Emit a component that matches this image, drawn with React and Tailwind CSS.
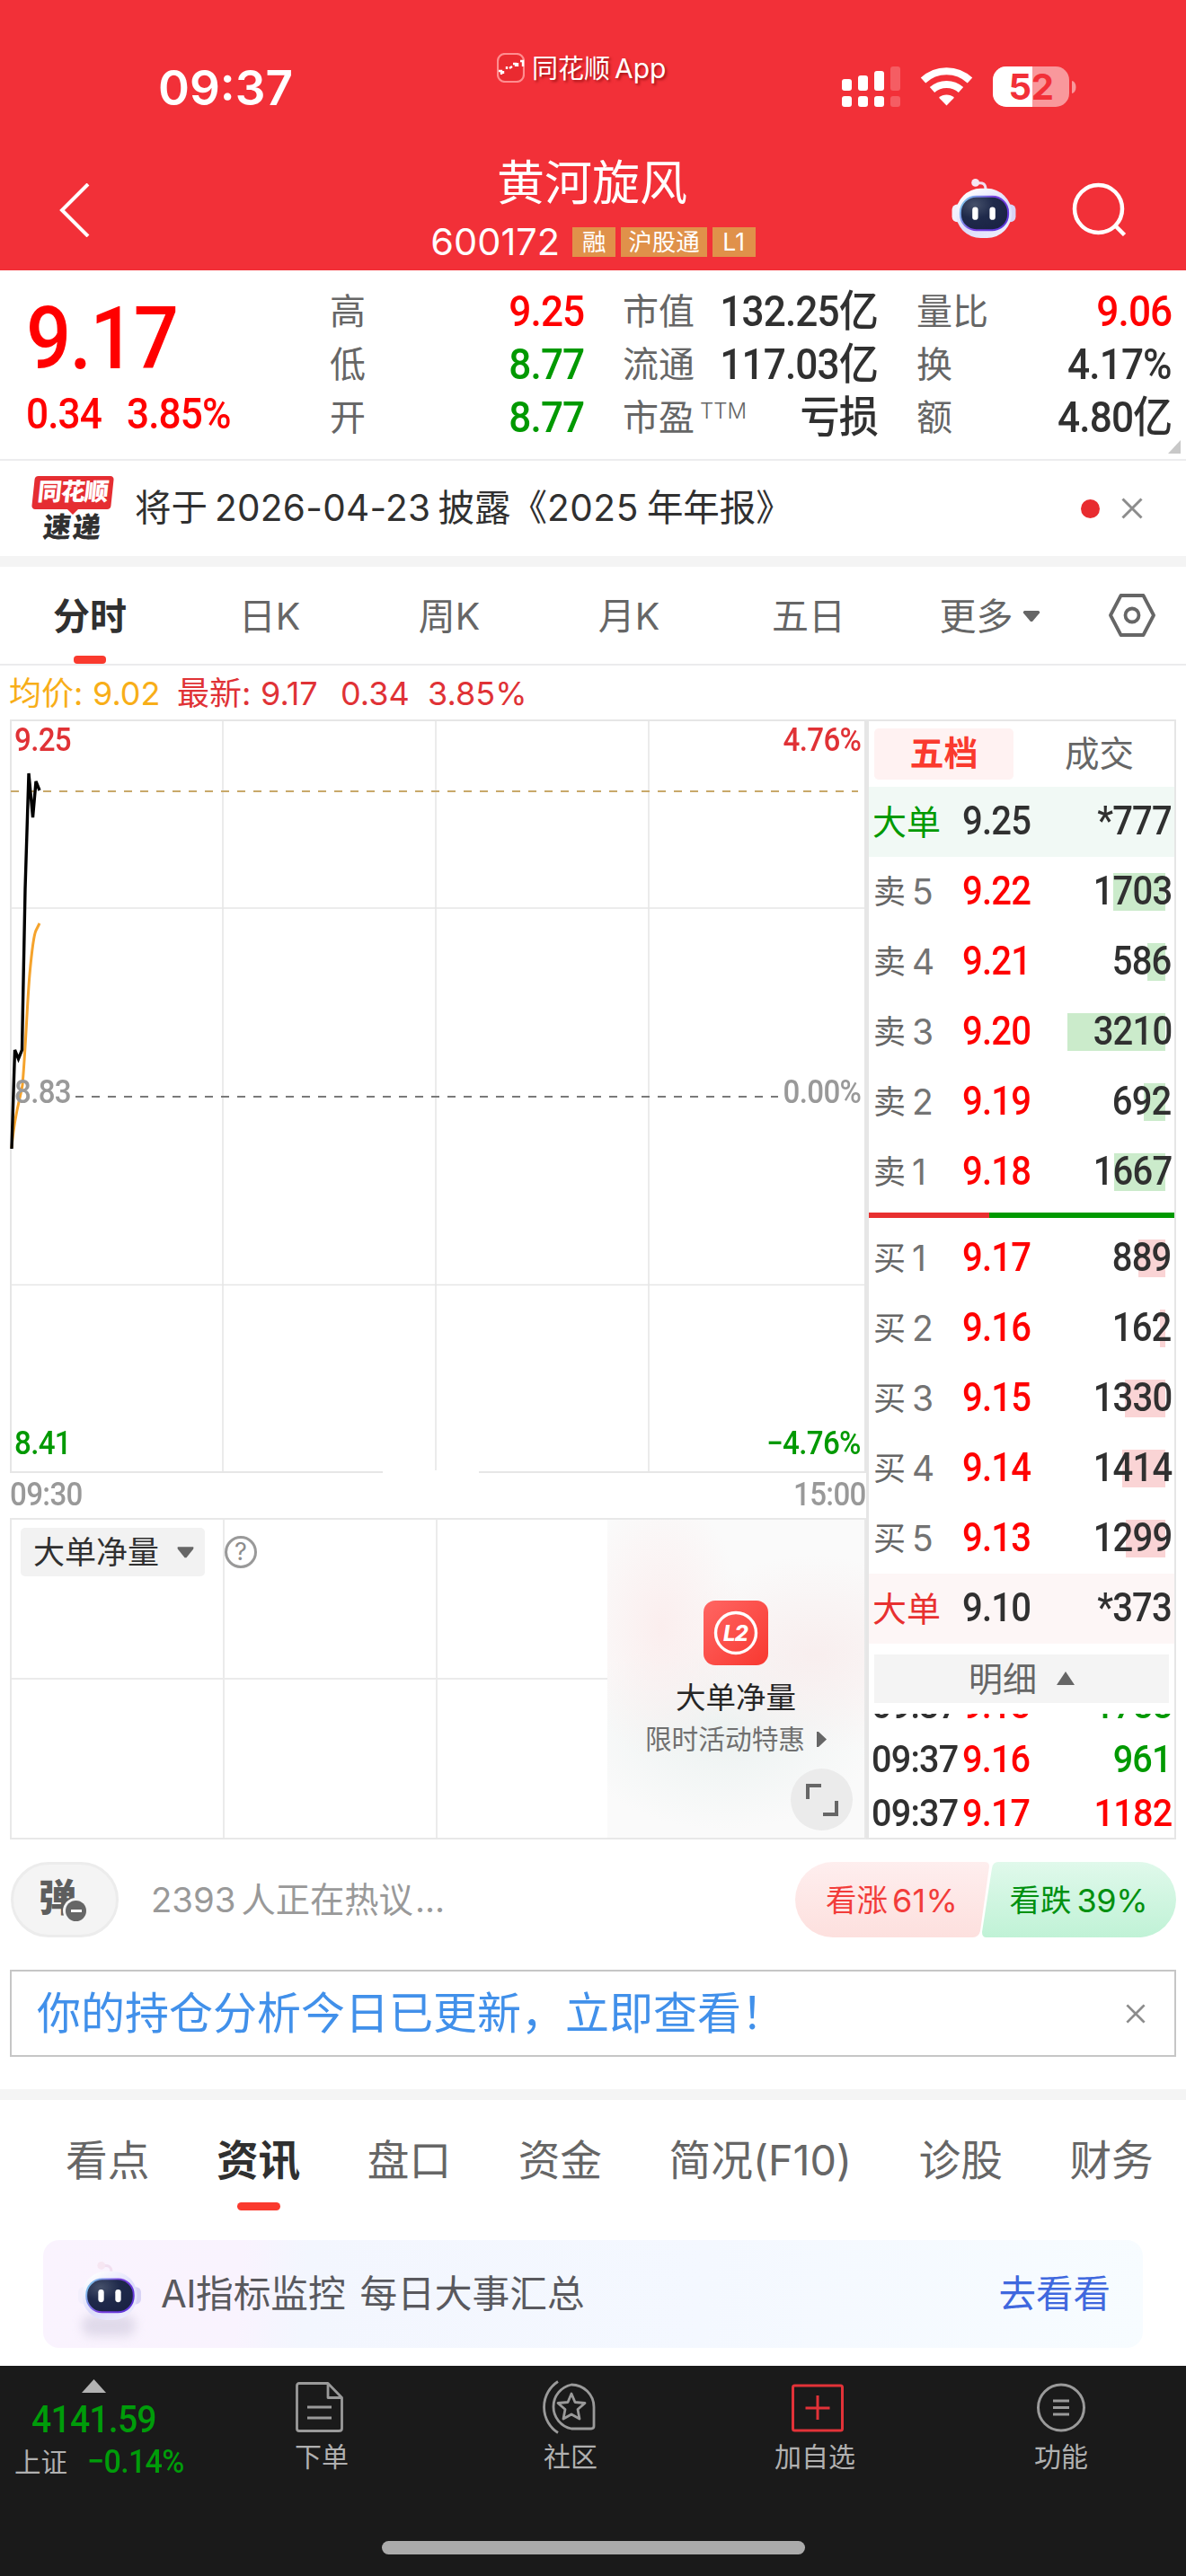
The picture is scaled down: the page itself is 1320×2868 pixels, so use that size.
import React from "react";

const CJK = "font-['Inter','Noto_Sans_CJK_SC',sans-serif]";
const NUM = "font-['Roboto','Noto_Sans_CJK_SC',sans-serif] font-medium tracking-[-0.020em] scale-x-[0.92]";

function Robot({ className }) {
  return (
    <svg className={className} viewBox="0 0 72 68" fill="none">
      <defs>
        <linearGradient id="shell" x1="20" y1="10" x2="56" y2="68" gradientUnits="userSpaceOnUse">
          <stop stopColor="#ffffff" />
          <stop offset="0.55" stopColor="#dcdcfa" />
          <stop offset="1" stopColor="#eeeefc" />
        </linearGradient>
        <linearGradient id="rim" x1="10" y1="22" x2="62" y2="56" gradientUnits="userSpaceOnUse">
          <stop stopColor="#7fd6ee" />
          <stop offset="0.5" stopColor="#7a3fe0" />
          <stop offset="1" stopColor="#5a35d8" />
        </linearGradient>
        <radialGradient id="visor" cx="0.3" cy="0.25" r="0.8">
          <stop stopColor="#45506a" />
          <stop offset="0.5" stopColor="#1f2a4b" />
          <stop offset="1" stopColor="#1a2344" />
        </radialGradient>
      </defs>
      <path d="M38 12c0-6-3-8-9-7" stroke="#f1dff0" strokeWidth="3" />
      <circle cx="26.500" cy="4.500" r="4.500" fill="#f6e6f2" />
      <rect x="0" y="29" width="12" height="20" rx="6" fill="#f3effc" />
      <rect x="60" y="29" width="12" height="20" rx="6" fill="#d8d3f6" />
      <rect x="4.500" y="11" width="63" height="56" rx="28" fill="url(#shell)" />
      <rect x="9.500" y="20" width="54" height="38" rx="18" fill="url(#visor)" stroke="url(#rim)" strokeWidth="2" />
      <rect x="23" y="32" width="6.500" height="14.500" rx="3.200" fill="#fff" />
      <rect x="42.500" y="32" width="6.500" height="14.500" rx="3.200" fill="#fff" />
    </svg>
  );
}

function Cross({ className }) {
  return (
    <svg className={className} viewBox="0 0 24 24" fill="none" stroke="#8c8c8c" strokeWidth="3">
      <path d="M1.500 1.500l21 21M22.500 1.500l-21 21" />
    </svg>
  );
}

function StatusBar() {
  return (
    <div className="flex h-[150px] pt-[56px]">
      <div className="ml-[176px] h-[84px] w-[160px] font-['Inter'] text-[53px] leading-[84px] font-semibold">09:37</div>
      <div className="ml-[217px] flex h-[38px] w-[200px] items-center gap-[8px]">
        <svg className="h-[33px] w-[31px] shrink-0" viewBox="0 0 31 33" fill="none">
          <rect x="1" y="1" width="29" height="31" rx="8" fill="#ea2a30" stroke="#ff8d8f" strokeWidth="2.200" />
          <path d="M2 20h3v4M7 20v3M11 15v3M14 17l3-2M18 12h3v3M23 11v4M26 9h3v6" stroke="#fff" strokeWidth="2.400" />
        </svg>
        <div className="pt-[2px] text-[29px] leading-[38px] whitespace-nowrap [text-shadow:2px_2px_3px_rgba(110,0,0,0.6)]">
          同花顺<span className="ml-[5px] text-[30px]">App</span>
        </div>
      </div>
      <svg className="mt-[16px] ml-[184px] h-[50px] w-[270px]" viewBox="0 0 270 50">
        <g fill="#fff">
          <rect x="0" y="16" width="11" height="13" rx="3" />
          <rect x="18" y="12" width="11" height="17" rx="3" />
          <rect x="36" y="7" width="11" height="22" rx="3" />
          <rect x="54" y="2" width="11" height="27" rx="3" opacity="0.22" />
          <rect x="0" y="35" width="11" height="12" rx="3" />
          <rect x="18" y="35" width="11" height="12" rx="3" />
          <rect x="36" y="35" width="11" height="12" rx="3" />
          <rect x="54" y="35" width="11" height="12" rx="3" opacity="0.22" />
        </g>
        <g fill="none" stroke="#fff" strokeWidth="8">
          <path d="M90.500 17.500a38 38 0 0 1 52 0" />
          <path d="M100.500 28a24 24 0 0 1 32 0" />
        </g>
        <path d="M116.500 45.500l-8.500-8.700a12.500 12.500 0 0 1 17 0z" fill="#fff" />
        <rect x="168" y="2" width="85" height="45" rx="15" fill="#fff" opacity="0.5" />
        <path d="M183 2h29v45h-29a15 15 0 0 1-15-15v-15a15 15 0 0 1 15-15z" fill="#fff" />
        <path d="M256 18c6 1 6 13 0 14z" fill="#fff" opacity="0.5" />
        <text x="210.500" y="39" textAnchor="middle" fontFamily="Inter" fontWeight="700" fontSize="40" fill="#f23038" letterSpacing="-0.5">52</text>
      </svg>
    </div>
  );
}

function Tag({ children }) {
  return <div className="h-[33px] min-w-[48px] bg-[#e0914a] px-[8px] text-center text-[26.500px] leading-[32px] text-white">{children}</div>;
}

function Header() {
  return (
    <div className="h-[301px] bg-[#f23038] text-white">
      <StatusBar />
      <div className="flex h-[151px]">
        <svg className="mt-[54px] ml-[64px] h-[60px] w-[38px]" viewBox="0 0 38 60" fill="none" stroke="#fff" strokeWidth="4">
          <path d="M34 1L5 30L34 59" />
        </svg>
        <div className="ml-[348px] flex w-[418px] flex-col items-center pt-[22px]">
          <div className="h-[64px] text-[53px] leading-[64px]">黄河旋风</div>
          <div className="mt-[13px] flex h-[40px] items-center gap-[6px] pl-[2px]">
            <div className="mr-[8px] text-[41.500px] leading-[40px]">600172</div>
            <Tag>融</Tag>
            <Tag>沪股通</Tag>
            <Tag>L1</Tag>
          </div>
        </div>
        <Robot className="mt-[49px] ml-[191px] h-[67px] w-[72px]" />
        <svg className="mt-[53px] ml-[62px] h-[60px] w-[62px]" viewBox="0 0 62 60" fill="none" stroke="#fff" strokeWidth="4.500">
          <circle cx="29.500" cy="29.500" r="26.500" />
          <path d="M48.500 48.500l10 10" />
        </svg>
      </div>
    </div>
  );
}

function Quote({ label, value, color, sup }) {
  return (
    <div className="flex h-[59px] items-center justify-between">
      <div className="flex text-[40px] leading-[59px] text-[#666]">
        {label}
        {sup && <span className="mt-[3px] ml-[6px] text-[24px] leading-[40px] font-light">{sup}</span>}
      </div>
      <div className={`${NUM} origin-right text-[48px] leading-[56px] ${color}`}>{value}</div>
    </div>
  );
}

function Quotes() {
  return (
    <div className="flex h-[212px] border-b-2 border-[#ececee]">
      <div className="w-[337px] pl-[29px] text-[#ff0000]">
        <div className={`${NUM} mt-[26px] h-[100px] origin-left text-[96px] leading-[100px]`}>9.17</div>
        <div className="mt-[6px] flex h-[58px] text-[48px] leading-[56px]">
          <span className={`${NUM} w-[112px] origin-left`}>0.34</span>
          <span className={`${NUM} origin-left`}>3.85%</span>
        </div>
      </div>
      <div className="mt-[16px] ml-[30px] w-[283px]">
        <Quote label="高" value="9.25" color="text-[#ff0000]" />
        <Quote label="低" value="8.77" color="text-[#009900]" />
        <Quote label="开" value="8.77" color="text-[#009900]" />
      </div>
      <div className="mt-[16px] ml-[43px] w-[284px]">
        <Quote label="市值" value="132.25亿" color="text-[#303030]" />
        <Quote label="流通" value="117.03亿" color="text-[#303030]" />
        <Quote label="市盈" sup="TTM" value="亏损" color="text-[#303030]" />
      </div>
      <div className="mt-[16px] ml-[43px] w-[284px]">
        <Quote label="量比" value="9.06" color="text-[#ff0000]" />
        <Quote label="换" value="4.17%" color="text-[#303030]" />
        <Quote label="额" value="4.80亿" color="text-[#303030]" />
      </div>
      <svg className="mt-[189px] ml-[-4px] h-[15px] w-[14px] shrink-0" viewBox="0 0 14 15" fill="#c8c8c8">
        <path d="M14 0v15H0z" />
      </svg>
    </div>
  );
}

function News() {
  return (
    <div className="flex h-[106px] items-center text-[#303030]">
      <div className="ml-[37px] w-[88px]">
        <div className="h-[37px] -skew-x-6 rounded-[4px] bg-[#e52d32] text-center text-[27px] leading-[35px] font-black tracking-[-1px] text-white">同花顺</div>
        <svg className="mx-auto h-[6px] w-[12px]" viewBox="0 0 12 6" fill="#e52d32">
          <path d="M0 0h12L6 6z" />
        </svg>
        <div className="h-[30px] -skew-x-6 text-center text-[31px] leading-[27px] font-black tracking-[2px]">速递</div>
      </div>
      <div className="ml-[25px] flex w-[1053px] text-[40.500px] leading-[50px] whitespace-nowrap">
        将于<span className="mx-[8px] tracking-[0.300px]">2026-04-23</span>披露《<span className="mr-[9px] tracking-[0.600px]">2025</span>年年报》
      </div>
      <div className="h-[21px] w-[21px] rounded-full bg-[#e82c30]" />
      <Cross className="ml-[24px] h-[24px] w-[24px]" />
    </div>
  );
}

function ChartTabs() {
  const tabs = ["日K", "周K", "月K", "五日"];
  return (
    <div className="flex h-[110px] items-start border-b-2 border-[#ebebed] text-[41px] text-[#666]">
      <div className="flex w-[200px] flex-col items-center">
        <div className="h-[99px] leading-[110px] font-bold text-[#303030]">分时</div>
        <div className="h-[9px] w-[36px] rounded-[4px] bg-[#fa3a2e]" />
      </div>
      {tabs.map((t) => (
        <div key={t} className="w-[200px] text-center leading-[110px]">
          {t}
        </div>
      ))}
      <div className="flex w-[200px] items-center justify-center gap-[10px] pl-[3px] leading-[110px]">
        更多
        <svg className="h-[13px] w-[20px]" viewBox="0 0 20 13" fill="#666">
          <path d="M2 0h16q2 1 1 2.500l-8 9.500h-2l-8-9.500q-1-1.500 1-2.500z" />
        </svg>
      </div>
      <svg className="mt-[30px] ml-[34px] h-[48px] w-[52px]" viewBox="0 0 52 48" fill="none" stroke="#666" strokeWidth="3.800">
        <path d="M13.500 2h25L50 24L38.500 46h-25L2 24z" strokeLinejoin="round" />
        <circle cx="26" cy="24" r="7.500" />
      </svg>
    </div>
  );
}

function Legend() {
  return (
    <div className="flex h-[60px] pl-[10px] text-[36px] leading-[62px] whitespace-nowrap text-[#e03236]">
      <span className="w-[93px] text-[#f8ae18]">均价:</span>
      <span className="w-[94px] text-[#f8ae18]">9.02</span>
      <span className="w-[93px]">最新:</span>
      <span className="w-[89px]">9.17</span>
      <span className="w-[97px]">0.34</span>
      <span>3.85%</span>
    </div>
  );
}

function PriceChart() {
  return (
    <div className="relative h-[889px] w-[953px]">
      <svg className="h-[889px] w-[953px]" viewBox="11 801 953 889" fill="none">
        <g stroke="#e6e6e6" strokeWidth="2">
          <path d="M11 802H964M12 801V1639M963 801V1639M11 1639H964" />
          <path d="M248 802V1639M485 802V1639M722 802V1639M12 1011H963M12 1430.500H963" strokeWidth="1.600" />
        </g>
        <path d="M426 1639H533" stroke="#fff" strokeWidth="4" />
        <path d="M12 881H955" stroke="#c8a96a" strokeWidth="2" strokeDasharray="9 9" />
        <path d="M84 1221H866" stroke="#7a7a7a" strokeWidth="2" strokeDasharray="9 9" />
        <path d="M13 1278C16 1240 22 1226 25 1208C29 1160 30 1120 33 1085C36 1052 38 1040 40 1036L44 1028" stroke="#f5a32c" strokeWidth="3" />
        <path d="M13 1279L16.500 1169L20.500 1179L24.500 1169L28 990L32 861L36.500 910L40 870L44 880" stroke="#000" strokeWidth="3.400" />
      </svg>
      <div className={`${NUM} absolute top-[1px] left-[5px] origin-left text-[36px] leading-[44px] text-[#e03236]`}>9.25</div>
      <div className={`${NUM} absolute top-[1px] right-[6px] origin-right text-[36px] leading-[44px] text-[#e03236]`}>4.76%</div>
      <div className={`${NUM} absolute top-[393px] left-[5px] origin-left text-[36px] leading-[44px] text-[#999]`}>8.83</div>
      <div className={`${NUM} absolute top-[393px] right-[6px] origin-right text-[36px] leading-[44px] text-[#999]`}>0.00%</div>
      <div className={`${NUM} absolute top-[784px] left-[5px] origin-left text-[36px] leading-[44px] text-[#009900]`}>8.41</div>
      <div className={`${NUM} absolute top-[784px] right-[6px] origin-right text-[36px] leading-[44px] text-[#009900]`}>−4.76%</div>
      <div className={`${NUM} absolute top-[841px] left-0 origin-left text-[36px] leading-[44px] text-[#999]`}>09:30</div>
      <div className={`${NUM} absolute top-[841px] right-0 origin-right text-[36px] leading-[44px] text-[#999]`}>15:00</div>
    </div>
  );
}

function NetChart() {
  return (
    <div className="flex h-[358px] w-[953px] border-2 border-[#e8e8e8]">
      <div className="grid w-[663px] grid-cols-[237px_237px_189px] grid-rows-[178px_176px]">
        <div className="border-r-2 border-b-2 border-[#ebebeb] pt-[9px] pl-[10px]">
          <div className="flex h-[54px] w-[205px] items-center rounded-[5px] bg-[#f2f2f2] pl-[14px] text-[#303030]">
            <span className="text-[35px] leading-[54px]">大单净量</span>
            <svg className="ml-[20px] h-[13px] w-[19px]" viewBox="0 0 20 13" fill="#666">
              <path d="M1 0h18q1 1 0 2.500l-8 10h-2l-8-10q-1-1.500 0-2.500z" />
            </svg>
          </div>
        </div>
        <div className="border-r-2 border-b-2 border-[#ebebeb]">
          <div className="mt-[18px] h-[36px] w-[36px] rounded-full border-[3px] border-[#999] text-center text-[27px] leading-[30px] text-[#8c8c8c]">?</div>
        </div>
        <div className="border-b-2 border-[#ebebeb]" />
        <div className="border-r-2 border-[#ebebeb]" />
        <div className="border-r-2 border-[#ebebeb]" />
        <div />
      </div>
      <div className="relative flex w-[286px] flex-col items-center bg-[#fafafa] bg-[radial-gradient(90px_150px_at_60px_120px,#fbeeee,transparent),radial-gradient(160px_110px_at_230px_150px,#f8eeee,transparent),radial-gradient(170px_110px_at_130px_235px,#ecf2f1,transparent)] pt-[90px]">
        <svg className="h-[72px] w-[72px]" viewBox="0 0 72 72">
          <defs>
            <linearGradient id="l2" x1="0" y1="0" x2="1" y2="1">
              <stop stopColor="#ff6663" />
              <stop offset="1" stopColor="#f83830" />
            </linearGradient>
          </defs>
          <rect width="72" height="72" rx="13" fill="url(#l2)" />
          <circle cx="36" cy="36" r="22.500" fill="none" stroke="#fff" strokeWidth="3.400" />
          <text x="35.500" y="45" textAnchor="middle" fontFamily="Inter" fontWeight="800" fontStyle="italic" fontSize="24" fill="#fff" letterSpacing="-1">L2</text>
        </svg>
        <div className="mt-[13px] h-[48px] text-[33.500px] leading-[46px] text-[#262626]">大单净量</div>
        <div className="flex h-[42px] items-center gap-[13px] text-[29.700px] leading-[42px] whitespace-nowrap text-[#707070]">
          限时活动特惠
          <svg className="h-[17px] w-[11px]" viewBox="0 0 11 17" fill="#666">
            <path d="M0 0h2l9 8.500l-9 8.500h-2z" />
          </svg>
        </div>
        <div className="absolute right-[13px] bottom-[8px] flex h-[69px] w-[69px] items-center justify-center rounded-full bg-[#ebebeb]">
          <svg className="h-[36px] w-[36px]" viewBox="0 0 36 36" fill="none" stroke="#666" strokeWidth="4">
            <path d="M2 17V2H17M19 34H34V19" />
          </svg>
        </div>
      </div>
    </div>
  );
}

function BookRow({ label, n, price, qty, bar, barColor }) {
  return (
    <div className="relative flex h-[78px] items-center">
      <div className="absolute right-[10px] h-[42px]" style={{ width: bar, background: barColor }} />
      <div className="ml-[5px] w-[43px] text-[36px] leading-[80px] text-[#666]">{label}</div>
      <div className="w-[56px] text-[39px] leading-[80px] text-[#737373]">{n}</div>
      <div className={`${NUM} origin-left text-[43.500px] leading-[80px] text-[#ff0000]`}>{price}</div>
      <div className={`${NUM} relative mr-[3px] ml-auto origin-right text-[43.500px] leading-[80px] text-[#303030]`}>{qty}</div>
    </div>
  );
}

function BigRow({ color, bg, price, qty }) {
  return (
    <div className={`flex h-[78px] items-center ${bg}`}>
      <div className={`ml-[4px] w-[100px] text-[38px] leading-[80px] ${color}`}>大单</div>
      <div className={`${NUM} origin-left text-[43.500px] leading-[80px] text-[#303030]`}>{price}</div>
      <div className={`${NUM} mr-[3px] ml-auto origin-right text-[43.500px] leading-[80px] text-[#303030]`}>{qty}</div>
    </div>
  );
}

function Tick({ price, qty, color }) {
  return (
    <div className="flex h-[60px] shrink-0 items-center text-[43px] leading-[60px]">
      <div className={`${NUM} ml-[3px] w-[101px] origin-left text-[#303030]`}>09:37</div>
      <div className={`${NUM} origin-left text-[#ff0000]`}>{price}</div>
      <div className={`${NUM} mr-[3px] ml-auto origin-right ${color}`}>{qty}</div>
    </div>
  );
}

const sells = [
  ["5", "9.22", "1703", 58],
  ["4", "9.21", "586", 20],
  ["3", "9.20", "3210", 109],
  ["2", "9.19", "692", 24],
  ["1", "9.18", "1667", 57],
];
const buys = [
  ["1", "9.17", "889", 30],
  ["2", "9.16", "162", 6],
  ["3", "9.15", "1330", 45],
  ["4", "9.14", "1414", 48],
  ["5", "9.13", "1299", 44],
];

function OrderBook() {
  return (
    <div className="flex h-[1247px] w-[345px] flex-col border-2 border-l-[3px] border-[#e6e6e6]">
      <div className="flex h-[73px] items-center">
        <div className="ml-[6px] h-[57px] w-[155px] rounded-[5px] bg-[#fff2f2] text-center text-[38px] leading-[54px] font-bold text-[#fa3a2e]">五档</div>
        <div className="ml-[57px] text-[38.500px] leading-[54px] text-[#666]">成交</div>
      </div>
      <BigRow color="text-[#009900]" bg="bg-[#f1f9f5]" price="9.25" qty="*777" />
      {sells.map(([n, p, q, b]) => (
        <BookRow key={n} label="卖" n={n} price={p} qty={q} bar={b} barColor="#cbebcb" />
      ))}
      <div className="mt-[6px] mb-[6px] flex h-[6px]">
        <div className="w-[134px] bg-[#e83030]" />
        <div className="flex-1 bg-[#009900]" />
      </div>
      {buys.map(([n, p, q, b]) => (
        <BookRow key={n} label="买" n={n} price={p} qty={q} bar={b} barColor="#fad4d5" />
      ))}
      <BigRow color="text-[#e83030]" bg="bg-[#fdf6f6]" price="9.10" qty="*373" />
      <div className="mx-[6px] mt-[12px] flex h-[54px] items-center justify-center gap-[22px] bg-[#f4f4f4] text-[38px] leading-[54px] text-[#666]">
        明细
        <svg className="h-[15px] w-[20px]" viewBox="0 0 20 15" fill="#666">
          <path d="M10 0L20 15H0z" />
        </svg>
      </div>
      <div className="mt-[12px] flex h-[139px] flex-col justify-end overflow-hidden">
        <Tick price="9.18" qty="1788" color="text-[#009900]" />
        <Tick price="9.16" qty="961" color="text-[#009900]" />
        <div className="mb-[-2px]">
          <Tick price="9.17" qty="1182" color="text-[#ff0000]" />
        </div>
      </div>
    </div>
  );
}

function Discussion() {
  return (
    <div className="flex h-[84px] items-center">
      <div className="relative ml-[12px] h-[84px] w-[120px] rounded-[42px] border-[3px] border-[#ececec] bg-[#f4f4f4]">
        <div className="ml-[28px] text-[42px] leading-[74px] font-black text-[#5e5e5e]">弹</div>
        <div className="absolute top-[40px] left-[58px] flex h-[23px] w-[23px] items-center justify-center rounded-full bg-[#666] ring-[3px] ring-[#f4f4f4]">
          <div className="h-[3px] w-[12px] bg-white" />
        </div>
      </div>
      <div className="ml-[36px] flex text-[38.300px] leading-[86px] text-[#999]">
        <span className="mr-[6px]">2393</span>人正在热议<span className="ml-[2px]">...</span>
      </div>
      <div className="relative mr-[11px] ml-auto flex h-[84px] w-[424px] text-[34.500px] leading-[86px] whitespace-nowrap">
        <svg className="absolute inset-0 h-[84px] w-[424px]" viewBox="0 0 424 84">
          <defs>
            <linearGradient id="up" x1="0" y1="0" x2="0" y2="1">
              <stop stopColor="#feeeee" />
              <stop offset="1" stopColor="#fde0de" />
            </linearGradient>
            <linearGradient id="down" x1="0" y1="0" x2="0" y2="1">
              <stop stopColor="#e0f9eb" />
              <stop offset="1" stopColor="#c0f2d6" />
            </linearGradient>
          </defs>
          <path d="M42 0H211Q216 0 216 5L206 77Q204 84 198 84H42A42 42 0 0 1 42 0z" fill="url(#up)" />
          <path d="M226 0H382A42 42 0 0 1 382 84H213Q208 84 208 78L219 7Q220 0 226 0z" fill="url(#down)" />
        </svg>
        <div className="relative ml-[34px] flex text-[#f23c3a]">
          看涨<span className="ml-[5px] text-[36px] tracking-[0.300px]">61%</span>
        </div>
        <div className="relative mr-[32px] ml-auto flex text-[#009010]">
          看跌<span className="ml-[6px] text-[36px] tracking-[-0.500px]">39%</span>
        </div>
      </div>
    </div>
  );
}

function SectionTabs() {
  const tabs = ["看点", "资讯", "盘口", "资金", "简况(F10)", "诊股", "财务"];
  return (
    <div className="flex h-[156px] gap-[74.500px] pl-[73px] text-[46.700px] whitespace-nowrap text-[#666]">
      {tabs.map((t) =>
        t === "资讯" ? (
          <div key={t} className="flex flex-col items-center font-bold text-[#303030]">
            <div className="h-[114px] leading-[134px]">{t}</div>
            <div className="h-[9px] w-[48px] rounded-[4.500px] bg-[#fa3a2e]" />
          </div>
        ) : (
          <div key={t} className="leading-[134px]">
            {t}
          </div>
        )
      )}
    </div>
  );
}

function Banner() {
  return (
    <div className="mx-[48px] flex h-[120px] items-center rounded-[18px] bg-[linear-gradient(95deg,#faf3fe_0%,#f9f3fe_18%,#f3f6fe_24%,#f4f8ff_60%,#f7fcff_100%)]">
      <div className="relative mt-[-6px] ml-[39px] h-[68px] w-[70px]">
        <div className="absolute top-[60px] left-[4px] h-[24px] w-[60px] rounded-full bg-[#b9b4cc] opacity-40 blur-[6px]" />
        <Robot className="relative h-[68px] w-[70px]" />
      </div>
      <div className="ml-[22px] text-[41.700px] leading-[60px] whitespace-nowrap text-[#59595e]">
        <span className="tracking-[-0.500px]">AI</span>指标监控<span className="ml-[4px]"> 每日大事汇总</span>
      </div>
      <div className="mr-[36px] ml-auto text-[41.500px] leading-[60px] text-[#3f68de]">去看看</div>
    </div>
  );
}

function NavItem({ label, children, left }) {
  return (
    <div className={`flex w-[100px] flex-col items-center ${left}`}>
      <div className="flex h-[90px] items-end pb-[16px]">{children}</div>
      <div className="h-[30px] text-[30px] leading-[23px] whitespace-nowrap">{label}</div>
    </div>
  );
}

function BottomNav() {
  return (
    <div className="h-[234px] bg-[#1a1a1a] text-[#b0b0b0]">
      <div className="flex h-[195px]">
        <div className="flex w-[209px] flex-col items-center">
          <svg className="mt-[15px] h-[15px] w-[27px]" viewBox="0 0 27 15" fill="#b3b3b3">
            <path d="M13.500 0L27 15H0z" />
          </svg>
          <div className={`${NUM} mt-[7px] h-[44px] text-[42.500px] leading-[46px] text-[#009c0a]`}>4141.59</div>
          <div className="mt-[8px] flex h-[36px] w-full items-center pl-[16px] text-[29.500px] leading-[36px] whitespace-nowrap">
            上证
            <span className={`${NUM} ml-[22px] origin-left text-[37px] text-[#009c0a]`}>−0.14%</span>
          </div>
        </div>
        <NavItem label="下单" left="ml-[99px]">
          <svg className="mr-[6px] h-[56px] w-[53px]" viewBox="0 0 53 56" fill="none" stroke="#9a9a9a" strokeWidth="2.800" strokeLinejoin="round">
            <path d="M36 1.500H4Q1.500 1.500 1.500 4V52Q1.500 54.500 4 54.500H48Q51.500 54.500 51.500 52V17.500L36 1.500V17.500H51.500" />
            <path d="M13 28H40M13 40H40" />
          </svg>
        </NavItem>
        <NavItem label="社区" left="ml-[177px]">
          <svg className="mr-[6px] mb-[-2px] h-[60px] w-[62px]" viewBox="0 0 62 60" fill="none" stroke="#9a9a9a" strokeWidth="2.800" strokeLinejoin="round">
            <path d="M20 1.500A34 34 0 0 0 20 58.500" />
            <path d="M35 5A25 25 0 0 0 35 54H57Q60 54 60 51V30A25 25 0 0 0 35 5z" />
            <path d="M35 15L39 24.500L50 25.500L42 32.500L44 43L35 38L26 43L28 32.500L20 25.500L31 24.500z" />
          </svg>
        </NavItem>
        <NavItem label="加自选" left="ml-[172px]">
          <svg className="mr-[-6px] h-[54px] w-[58px]" viewBox="0 0 58 54" fill="none" stroke="#e23238" strokeWidth="3">
            <rect x="1.500" y="2" width="55" height="50" rx="2" />
            <path d="M29 13V40M15.500 27H42.500" />
          </svg>
        </NavItem>
        <NavItem label="功能" left="ml-[174px]">
          <svg className="h-[55px] w-[54px]" viewBox="0 0 54 55" fill="none" stroke="#9a9a9a" strokeWidth="3">
            <circle cx="27" cy="27.500" r="25.500" />
            <path d="M18 20H36M18 27.500H36M18 35H36" />
          </svg>
        </NavItem>
      </div>
      <div className="mx-auto h-[15px] w-[471px] rounded-[8px] bg-[#ababab]" />
    </div>
  );
}

export default function App() {
  return (
    <div className={`${CJK} flex h-[2868px] w-[1320px] flex-col overflow-hidden bg-white`} lang="zh-CN">
      <Header />
      <Quotes />
      <News />
      <div className="h-[12px] bg-[#f4f4f4]" />
      <ChartTabs />
      <Legend />
      <div className="flex pl-[11px]">
        <div className="w-[953px]">
          <PriceChart />
          <NetChart />
        </div>
        <OrderBook />
      </div>
      <div className="h-[25px]" />
      <Discussion />
      <div className="mx-[11px] mt-[36px] flex h-[97px] items-center justify-between border-2 border-[#c6c6c6] pr-[32px] pl-[28px]">
        <div className="text-[49px] leading-[90px] text-[#4190ea]">你的持仓分析今日已更新，立即查看！</div>
        <Cross className="h-[22px] w-[22px]" />
      </div>
      <div className="mt-[36px] h-[12px] bg-[#f4f4f4]" />
      <SectionTabs />
      <Banner />
      <div className="flex-1" />
      <BottomNav />
    </div>
  );
}
